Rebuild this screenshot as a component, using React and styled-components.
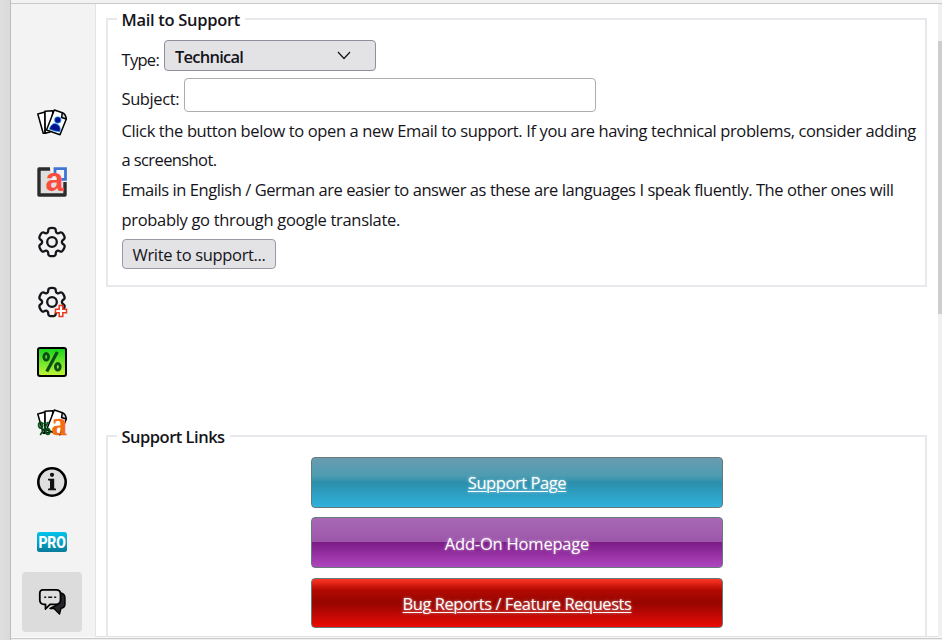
import React from 'react';
import styled, { createGlobalStyle } from 'styled-components';

const Global = createGlobalStyle`
  * { box-sizing: border-box; }
  body { margin: 0; overflow: hidden; background: #f2f2f2; }
`;

const Page = styled.div`
  width: 942px;
  height: 640px;
  display: grid;
  grid-template-columns: 11px 931px;
  overflow: hidden;
  color: #15141a;
  font-family: 'Open Sans', 'Noto Sans', sans-serif;
  font-size: 16.5px;
  line-height: 30px;
`;
const Edge = styled.div`
  background: linear-gradient(90deg, #dfdfdf, #dadada);
  border-right: 1px solid #bdbdbd;
`;
const Frame = styled.div`
  height: 640px;
  display: grid;
  grid-template-rows: 3px 636px 1px;
  background: #f0f0f0;
`;
const TopBar = styled.div`
  background: #f2f2f2;
`;
const Body = styled.div`
  display: grid;
  grid-template-columns: 85px 842px 4px;
  border-top: 1px solid #c9c9c9;
  border-bottom: 1px solid #c9c9c9;
  background: #fbfbfb;
`;
const Sidebar = styled.nav`
  height: 633px;
  padding: 88px 0 0 11px;
  background: #f3f3f3;
  border-right: 1px solid #e3e3e6;
`;
const NavButton = styled.button`
  width: 60px;
  height: 60px;
  padding: 0;
  border: 0;
  border-radius: 4px;
  display: flex;
  align-items: center;
  justify-content: center;
  background: ${(p) => (p.$active ? '#dcdcdc' : 'transparent')};
  svg { display: block; overflow: visible; }
`;
const Content = styled.main`
  height: 633px;
  padding: 14px 11px 0 10px;
  background: #fff;
  border-bottom: 1px solid #e0e0e0;
  overflow: hidden;
`;
const Group = styled.section`
  height: ${(p) => p.$height}px;
  margin-bottom: 148px;
  border: 2px solid #e8e8ed;
  padding-left: 14px;
`;
const Legend = styled.h2`
  width: ${(p) => p.$width}px;
  height: 22px;
  margin: -11px 0 0 -5px;
  padding-left: 4.5px;
  background: #fff;
  font-size: 16.5px;
  line-height: 22px;
  font-weight: 600;
  white-space: nowrap;
  letter-spacing: ${(p) => p.$track}px;
`;
const Field = styled.div`
  display: flex;
  height: ${(p) => p.$height}px;
  margin-top: ${(p) => p.$top}px;
`;
const Label = styled.label`
  width: ${(p) => p.$width}px;
  padding-top: ${(p) => p.$drop}px;
  margin-left: -0.5px;
  margin-right: 0.5px;
  white-space: nowrap;
  letter-spacing: ${(p) => p.$track}px;
`;
const Select = styled.div`
  width: 212px;
  height: 31px;
  padding: 2px 23px 0 10px;
  display: flex;
  align-items: center;
  justify-content: space-between;
  border: 1px solid #8f8f9d;
  border-radius: 4px;
  background: #e3e3e6;
  font-weight: 600;
  letter-spacing: -0.75px;
`;
const Input = styled.input`
  width: 412px;
  height: 34px;
  border: 1px solid #adadad;
  border-radius: 4px;
  background: #fff;
`;
const Copy = styled.div`
  margin: 4px 0 0 -0.5px;
  height: 119px;
`;
const Line = styled.div`
  height: ${(p) => p.$height || 30}px;
  white-space: nowrap;
  letter-spacing: ${(p) => p.$track}px;
`;
const Write = styled.button`
  display: block;
  width: 154px;
  height: 30px;
  margin: 4px 0 0 0;
  padding: 1px 0 0 9.5px;
  text-align: left;
  border: 1px solid #9a9aa6;
  border-radius: 4px;
  background: #e3e3e6;
  color: #15141a;
  font: inherit;
  line-height: 28px;
  white-space: nowrap;
  letter-spacing: -0.33px;
`;
const Links = styled.div`
  width: 412px;
  margin: 9px 0 0 189px;
  display: grid;
  grid-template-rows: 51px 52px 50px;
  row-gap: 9px;
`;
const fills = {
  blue: 'linear-gradient(#6a9bb0 0%, #4d9cb1 36%, #2b8fab 50%, #2da0c4 75%, #32b2dc 100%)',
  purple: 'linear-gradient(#a868b5 0%, #9d56aa 49%, #7b1c87 50%, #b146bf 100%)',
  red: 'linear-gradient(#ff3526 0%, #b20a02 23%, #960500 50%, #c00804 75%, #eb0b02 100%)',
};
const LinkButton = styled.a`
  height: ${(p) => p.$height || 51}px;
  display: flex;
  justify-content: center;
  align-items: center;
  padding-top: ${(p) => p.$drop}px;
  border: 1px solid #667a7b;
  border-radius: 4px;
  background: ${(p) => fills[p.$tone]};
  color: #fff;
  text-decoration: ${(p) => (p.$plain ? 'none' : 'underline')};
  text-underline-offset: 2px;
  text-decoration-thickness: 1px;
  text-shadow: 0 0 3px rgba(255, 255, 255, 0.6);
  white-space: nowrap;
  letter-spacing: ${(p) => p.$track}px;
`;
const Scroll = styled.div`
  height: 633px;
  padding-top: 37px;
  background: #f0f0f0;
`;
const Thumb = styled.div`
  height: 273px;
  background: #cdcdcd;
`;

const Svg = ({ children }) => (
  <svg width="30" height="30" viewBox="0 0 30 30" fill="none">{children}</svg>
);

const CardShapes = () => (
  <g stroke="#000" strokeWidth="1.5" strokeLinejoin="round" fill="#fff">
    <path d="M.8 7 8 5v21.3H6.2Z" />
    <path d="M8 4.2 16 3.8 13 25l-4.8 1.2Z" />
    <path d="M17.3 3 25.5 5.8 29.3 12 23 27.7 9.5 23Z" />
    <path d="M25.3 5.8 24.6 10.5 29.2 12Q29 7 25.3 5.8Z" fill="#c9d9f5" />
  </g>
);
const ContactCards = () => (
  <Svg>
    <CardShapes />
    <g fill="#06128f" stroke="#35b9f0" strokeWidth=".7">
      <path d="M12.2 22.2Q14.5 15.5 19 16.6Q24.5 18.2 23 25Q17 24.2 12.2 22.2Z" />
      <circle cx="20.8" cy="13" r="3.3" />
    </g>
  </Svg>
);
const TextVariable = () => (
  <Svg>
    <path d="M2 2h26v26H2z" fill="#dfdfdf" />
    <path d="M13 2H2v26h26V15" stroke="#2c2c2c" strokeWidth="3.4" strokeLinejoin="round" />
    <path d="M14 0h16v15H14z" fill="#f3f3f3" />
    <path d="M18 8V1.7h10.5v10.6H20" stroke="#4075d2" strokeWidth="2.8" />
    <text x="8.5" y="24" fontFamily="Liberation Sans" fontWeight="700" fontSize="34" fill="#fb4c3e" textLength="18" lengthAdjust="spacingAndGlyphs">a</text>
  </Svg>
);

const gearPath = (() => {
  const pts = [];
  for (let k = 0; k < 6; k += 1) {
    [[-21, 11], [-15, 14.7], [15, 14.7], [21, 11], [30, 10.3]].forEach(([da, r]) => {
      const a = ((k * 60 - 90 + da) * Math.PI) / 180;
      pts.push([15 + r * 0.95 * Math.cos(a), 15 + r * Math.sin(a)]);
    });
  }
  const mid = (a, b) => `${((a[0] + b[0]) / 2).toFixed(2)} ${((a[1] + b[1]) / 2).toFixed(2)}`;
  const n = pts.length;
  return `M${mid(pts[n - 1], pts[0])}${pts
    .map((p, i) => `Q${p[0].toFixed(2)} ${p[1].toFixed(2)} ${mid(p, pts[(i + 1) % n])}`)
    .join('')}Z`;
})();
const Gear = ({ plus }) => (
  <Svg>
    <path d={gearPath} stroke="#15141a" strokeWidth="2.3" />
    <circle cx="15" cy="15" r="4.8" stroke="#15141a" strokeWidth="2.3" />
    {plus && (
      <path d="M22.2 18.5h3.6v3.7h3.7v3.6h-3.7v3.7h-3.6v-3.7h-3.7v-3.6h3.7z" fill="#fff" stroke="#e8391c" strokeWidth="1.5" />
    )}
  </Svg>
);
const Percent = () => (
  <Svg>
    <defs>
      <linearGradient id="lime" x1="0" y1="0" x2="0" y2="1">
        <stop stopColor="#13d51c" />
        <stop offset="1" stopColor="#c6f536" />
      </linearGradient>
    </defs>
    <rect x="1" y="1" width="28" height="28" rx="2" fill="url(#lime)" stroke="#000" strokeWidth="2" />
    <g stroke="#0d4d17" strokeWidth="2.8">
      <ellipse cx="9.2" cy="9.8" rx="2.4" ry="3.3" />
      <ellipse cx="20.8" cy="19.8" rx="2.4" ry="3.3" />
      <path d="M20.3 5 9.8 24.6" strokeWidth="3.2" />
    </g>
  </Svg>
);
const TemplateCards = () => (
  <Svg>
    <CardShapes />
    <g stroke="#06521a">
      <ellipse cx="3.6" cy="18.2" rx="1.9" ry="2.8" strokeWidth="1.9" />
      <ellipse cx="10.8" cy="24.6" rx="1.9" ry="2.8" strokeWidth="1.9" />
      <path d="M11.5 15 3.2 28" strokeWidth="1.5" />
      <path d="M4.5 16Q8 17.3 11.3 15.4" strokeWidth="1" />
    </g>
    <text x="14.3" y="28" fontFamily="Liberation Serif" fontWeight="700" fontSize="33" fill="#f46c12" stroke="#f46c12" strokeWidth=".4" textLength="15.7" lengthAdjust="spacingAndGlyphs">a</text>
  </Svg>
);
const Info = () => (
  <Svg>
    <circle cx="15" cy="15" r="13.7" fill="#dfdfdf" stroke="#000" strokeWidth="2.6" />
    <circle cx="15" cy="7.8" r="2.1" fill="#111" />
    <path d="M11 11.8h6.2v9.5l1.8.5v1.4h-8v-1.4l2-.5v-7.5l-2-.5z" fill="#111" />
  </Svg>
);
const Pro = () => (
  <Svg>
    <defs>
      <linearGradient id="pro" x1="0" y1="0" x2="0" y2="1">
        <stop stopColor="#00c4ee" />
        <stop offset="1" stopColor="#087b9a" />
      </linearGradient>
    </defs>
    <rect y="5" width="30" height="20" rx="2.5" fill="url(#pro)" />
    <text x="1.4" y="20.8" fontFamily="Roboto" fontWeight="700" fontSize="16" fill="#fff" stroke="#fff" strokeWidth=".2" textLength="27.4" lengthAdjust="spacingAndGlyphs">PRO</text>
  </Svg>
);
const Chat = () => (
  <Svg>
    <path d="M24 6Q28 7 28 11v6q0 4-4 4.3L22.5 27 17 21.5H13L20 18Z" fill="#26252b" stroke="#000" strokeWidth="1.4" strokeLinejoin="round" />
    <path d="M6 2.8H19Q23.5 2.8 23.5 7v6.3q0 4-4.5 4h-6L8.5 22v-4.7H7Q2.8 17.3 2.8 13V6.5Q2.8 2.8 6 2.8Z" fill="#dedede" stroke="#000" strokeWidth="1.8" strokeLinejoin="round" />
    <path d="M7.2 10.3h2M11.2 10.3h4M17.2 10.3h2" stroke="#111" strokeWidth="1.6" />
  </Svg>
);

const tabs = [
  ['Contacts', <ContactCards />],
  ['Text', <TextVariable />],
  ['Settings', <Gear />],
  ['Advanced', <Gear plus />],
  ['Variables', <Percent />],
  ['Templates', <TemplateCards />],
  ['Info', <Info />],
  ['Pro', <Pro />],
  ['Support', <Chat />],
];

export default function App() {
  return (
    <Page>
      <Global />
      <Edge />
      <Frame>
        <TopBar />
        <Body>
          <Sidebar>
            {tabs.map(([name, icon]) => (
              <NavButton key={name} aria-label={name} $active={name === 'Support'}>{icon}</NavButton>
            ))}
          </Sidebar>
          <Content>
            <Group $height={269}>
              <Legend $width={128} $track={-0.3}><span>Mail to Support</span></Legend>
              <Field $height={31} $top={9}>
                <Label $width={42} $drop={5} $track={-0.7}><span>Type:</span></Label>
                <Select>
                  <span>Technical</span>
                  <svg width="16" height="16" viewBox="0 0 16 16" fill="none">
                    <path d="m2 3 6 6.5L14 3" stroke="#15141a" strokeWidth="1.2" />
                  </svg>
                </Select>
              </Field>
              <Field $height={34} $top={7}>
                <Label $width={62} $drop={6} $track={-0.4}><span>Subject:</span></Label>
                <Input />
              </Field>
              <Copy>
                <Line $height={29} $track={-0.375}><span>Click the button below to open a new Email to support. If you are having technical problems, consider adding</span></Line>
                <Line $track={-0.6}><span>a screenshot.</span></Line>
                <Line $track={-0.435}><span>Emails in English / German are easier to answer as these are languages I speak fluently. The other ones will</span></Line>
                <Line $track={-0.32}><span>probably go through google translate.</span></Line>
              </Copy>
              <Write><span>Write to support...</span></Write>
            </Group>
            <Group $height={260}>
              <Legend $width={113} $track={-0.5}><span>Support Links</span></Legend>
              <Links>
                <LinkButton $tone="blue" $drop={0} $track={-0.43}><span>Support Page</span></LinkButton>
                <LinkButton $tone="purple" $drop={2} $plain $track={-0.2}><span>Add-On Homepage</span></LinkButton>
                <LinkButton $tone="red" $drop={2} $height={50} $track={-0.45}><span>Bug Reports / Feature Requests</span></LinkButton>
              </Links>
            </Group>
          </Content>
          <Scroll><Thumb /></Scroll>
        </Body>
      </Frame>
    </Page>
  );
}
